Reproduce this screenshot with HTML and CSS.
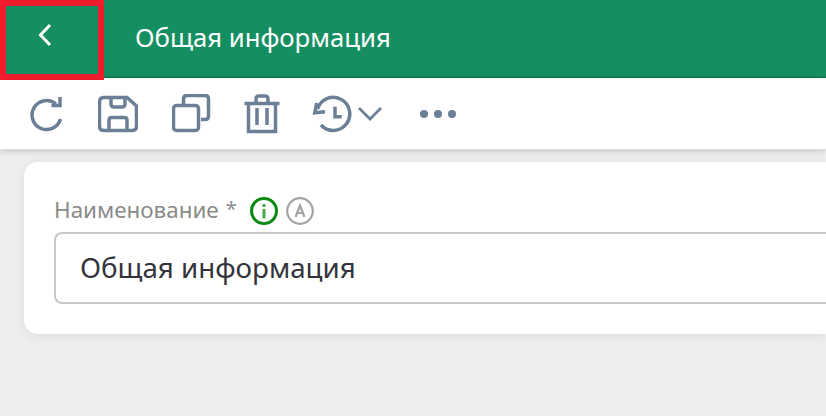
FILE: index.html
```html
<!DOCTYPE html>
<html lang="ru">
<head>
    <meta charset="UTF-8">
    <meta name="viewport" content="width=device-width, initial-scale=1.0">
    <title>Общая информация</title>
    <link rel="stylesheet" href="styles.css">
</head>
<body>

<!-- Шапка -->
<header class="topbar">
    <a href="#" class="back-btn">
        <svg width="20" height="26" viewBox="0 0 20 26"><path d="M15 3 L5.500 13 L15 23" fill="none" stroke="#fff" stroke-width="3"/></svg>
    </a>
    <span class="topbar-title">Общая информация</span>
</header>

<!-- Панель инструментов -->
<div class="toolbar">
    <svg class="tool" width="38" height="40" viewBox="0 0 38 40">
        <path d="M33.500 25 A14.500 14.500 0 1 1 29 10" />
        <path d="M33 3 V11.500 H24.500" />
    </svg>
    <svg class="tool tool-save" width="40" height="40" viewBox="0 0 40 40">
        <path d="M6 3.500 H29 L38.500 12 V32 Q38.500 36.500 34 36.500 H6 Q1.500 36.500 1.500 32 V8 Q1.500 3.500 6 3.500 Z" />
        <path d="M13 4 V10 Q13 13 16 13 H24 Q27 13 27 10 V4" />
        <path d="M11 36 V26 Q11 23.500 14 23.500 H26 Q29 23.500 29 26 V36" />
    </svg>
    <svg class="tool tool-copy" width="40" height="40" viewBox="0 0 40 40">
        <rect x="1.500" y="11.500" width="25" height="25" rx="3" />
        <path d="M11.500 10 V5 Q11.500 1.500 15 1.500 H33 Q36.500 1.500 36.500 5 V22 Q36.500 25.500 33 25.500 H29" />
    </svg>
    <svg class="tool tool-trash" width="38" height="40" viewBox="0 0 38 40">
        <path d="M0.500 9.500 H35.500" />
        <path d="M12 8 V5 Q12 2 15 2 H21 Q24 2 24 5 V8" />
        <path d="M4.500 9 V37.500 H31.500 V9" />
        <path d="M13 14 V31 M23 14 V31" />
    </svg>
    <svg class="tool tool-history" width="72" height="40" viewBox="0 0 72 40">
        <path d="M5.500 15 A16.500 16.500 0 1 1 9 31" />
        <path d="M4.700 9 L2.800 18.700 L13 17.700" />
        <path d="M23 12.700 V22.700 H29.700" />
        <path class="chevron" d="M47 14 L58 25 L69 14" />
    </svg>
    <div class="more-dots"><span></span><span></span><span></span></div>
</div>

<!-- Карточка -->
<div class="card">
    <div class="field-label">
        <span class="label-text">Наименование</span>
        <span class="label-star">*</span>
        <svg class="icon-info" width="28" height="28" viewBox="0 0 28 28">
            <circle cx="14" cy="14" r="12.500" />
            <rect x="12.500" y="7" width="3" height="3" />
            <rect x="12.500" y="12" width="3" height="9.500" />
        </svg>
        <svg class="icon-auto" width="28" height="28" viewBox="0 0 28 28">
            <circle cx="14" cy="14" r="12.800" />
            <path d="M9.500 20 L14 8.500 L18.500 20 M10.800 16 H17.200" />
        </svg>
    </div>
    <div class="field-input">Общая информация</div>
</div>

</body>
</html>
```

FILE: styles.css
```css
body {
    margin: 0;
    height: 416px;
    overflow: hidden;
    background-color: #eeeeee;
    font-family: "Noto Sans", sans-serif;
}

/* шапка */
.topbar {
    display: flex;
    align-items: flex-start;
    height: 77px;
    background-color: #158f61;
    border-bottom: 1px solid #0f6f4b;
    color: #fff;
}

.back-btn {
    position: relative;
    z-index: 2;
    display: flex;
    align-items: center;
    justify-content: center;
    box-sizing: border-box;
    flex: 0 0 104px;
    height: 80px;
    padding: 0 14px 10px 0;
    border: 6px solid #f01c2e;
}

.topbar-title {
    margin: 22px 0 0 31px;
    font-size: 25.700px;
    line-height: 32px;
}

/* панель инструментов */
.toolbar {
    display: flex;
    align-items: center;
    height: 72px;
    padding-left: 27px;
    background-color: #fff;
    box-shadow: 0 1px 6px rgba(0, 0, 0, 0.18);
    border-bottom: 1px solid #d5dde6;
    box-sizing: border-box;
}

.tool {
    flex: none;
    fill: none;
    stroke: #6b7f96;
    stroke-width: 3.500;
}

.tool .chevron {
    stroke-width: 2.800;
}

.tool-save { margin-left: 33px; }
.tool-copy { margin-left: 34px; }
.tool-trash { margin-left: 32px; }
.tool-history { margin-left: 30px; }

.more-dots {
    display: flex;
    gap: 6px;
    margin-left: 36px;
}

.more-dots span {
    width: 8px;
    height: 8px;
    border-radius: 50%;
    background-color: #6b7f96;
}

/* карточка */
.card {
    box-sizing: border-box;
    height: 172px;
    margin: 12px 0 0 24px;
    padding: 28px 0 0 30px;
    background-color: #fff;
    border-radius: 14px 0 0 14px;
    box-shadow: 0 2px 12px rgba(0, 0, 0, 0.08);
}

.field-label {
    display: flex;
    align-items: center;
    height: 42px;
    font-size: 22.400px;
    line-height: 38px;
    color: #8a8a8a;
}

.label-text {
    margin-bottom: 2px;
}

.label-star {
    margin: 0 0 5px 7px;
    font-size: 20px;
}

.icon-info {
    margin-left: 13px;
    fill: none;
}

.icon-info circle {
    stroke: #0b8a12;
    stroke-width: 3;
}

.icon-info rect {
    fill: #4aa650;
}

.icon-auto {
    margin-left: 8px;
    fill: none;
    stroke: #a4a4a4;
    stroke-width: 2.200;
}

.field-input {
    box-sizing: border-box;
    height: 72px;
    padding: 0 24px;
    border: 2px solid #c8c8c8;
    border-right: 0;
    border-radius: 8px 0 0 8px;
    font-size: 27.700px;
    line-height: 66px;
    color: #33333b;
}
```
